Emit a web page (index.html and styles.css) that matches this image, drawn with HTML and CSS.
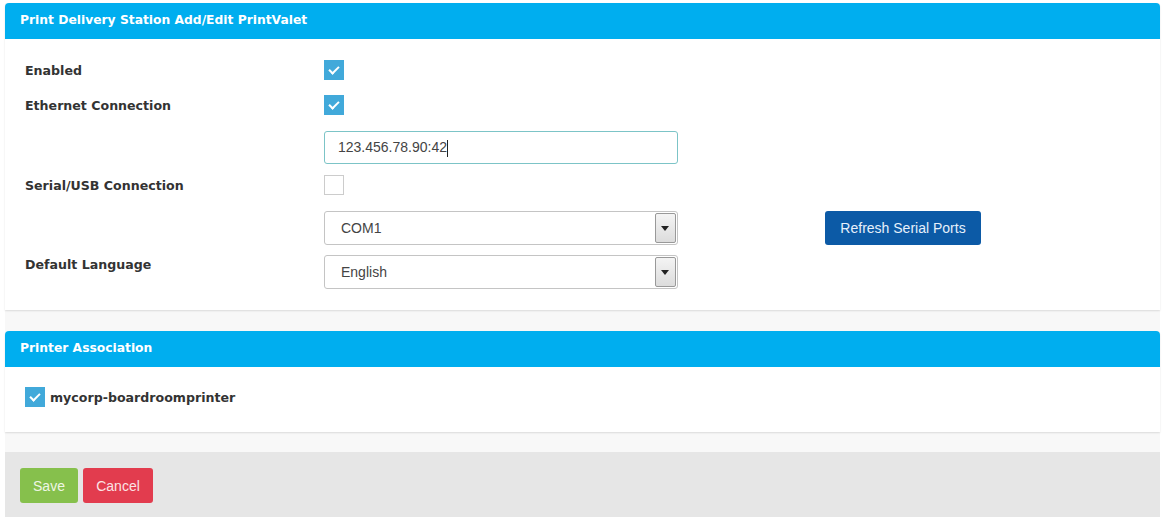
FILE: index.html
```html
<!DOCTYPE html>
<html lang="en">
<head>
    <meta charset="UTF-8">
    <title>Print Delivery Station Add/Edit PrintValet</title>
    <link rel="stylesheet" href="styles.css">
</head>
<body>

    <div class="page">
        <div class="panel">
            <div class="panel-heading">Print Delivery Station Add/Edit PrintValet</div>
            <div class="panel-body">
                <div class="row row-enabled">
                    <label>Enabled</label>
                    <span class="check checked"></span>
                </div>
                <div class="row row-ethernet">
                    <label>Ethernet Connection</label>
                    <span class="check checked"></span>
                </div>
                <div class="row row-address">
                    <span></span>
                    <div class="text-input">123.456.78.90:42<span class="caret"></span></div>
                </div>
                <div class="row row-serial">
                    <label>Serial/USB Connection</label>
                    <span class="check"></span>
                </div>
                <div class="row row-port">
                    <span></span>
                    <div class="select">
                        <span class="select-value">COM1</span>
                        <span class="select-arrow"></span>
                    </div>
                    <span></span>
                    <button class="btn btn-blue" type="button">Refresh Serial Ports</button>
                </div>
                <div class="row row-language">
                    <label>Default Language</label>
                    <div class="select">
                        <span class="select-value">English</span>
                        <span class="select-arrow"></span>
                    </div>
                </div>
            </div>
        </div>

        <div class="panel panel-last">
            <div class="panel-heading">Printer Association</div>
            <div class="panel-body panel-body-short">
                <div class="printer">
                    <span class="check checked"></span>
                    <label>mycorp-boardroomprinter</label>
                </div>
            </div>
        </div>

        <div class="footer">
            <button class="btn btn-green" type="button">Save</button>
            <button class="btn btn-red" type="button">Cancel</button>
        </div>
    </div>

</body>
</html>
```

FILE: styles.css
```css
body {
    margin: 0;
    padding: 0;
    background-color: #fff;
    font-family: "DejaVu Sans", Verdana, sans-serif;
    color: #333;
}

.page {
    margin: 3px 4px 0 5px;
    background-color: #f8f8f8;
    display: flex;
    flex-direction: column;
}

.panel {
    background-color: #fff;
    border-radius: 4px 4px 0 0;
    box-shadow: 0 1px 2px rgba(0, 0, 0, 0.12);
    margin-bottom: 21px;
}

.panel-last {
    margin-bottom: 20px;
}

.panel-heading {
    height: 36px;
    line-height: 35px;
    padding: 0 15px;
    background-color: #00aeef;
    border-radius: 4px 4px 0 0;
    color: #fff;
    font-size: 12.3px;
    font-weight: bold;
}

.panel-body {
    padding: 21px 20px 21px 20px;
}

.panel-body-short {
    padding: 20px 20px 25px 20px;
}

.row {
    display: grid;
    grid-template-columns: 299px 354px 147px auto;
    align-items: center;
}

.row label,
.printer label {
    font-size: 12.6px;
    font-weight: bold;
    color: #333;
}

.row-enabled { margin-bottom: 15px; }
.row-ethernet { margin-bottom: 16px; }
.row-address { margin-bottom: 11px; }
.row-serial { margin-bottom: 16px; }
.row-port { margin-bottom: 10px; }
.row-language { align-items: start; }
.row-language label { padding-top: 2px; }

/* checkboxes */
.check {
    display: inline-block;
    box-sizing: border-box;
    width: 20px;
    height: 20px;
    border: 1px solid #ccc;
    background-color: #fff;
    position: relative;
}

.check.checked {
    border-color: #41a9da;
    background-color: #41a9da;
}

.check.checked::after {
    content: "";
    position: absolute;
    left: 6px;
    top: 3px;
    width: 4px;
    height: 8px;
    border-right: 2px solid #fff;
    border-bottom: 2px solid #fff;
    transform: rotate(45deg);
}

/* inputs */
.text-input {
    box-sizing: border-box;
    height: 33px;
    padding: 0 13px;
    border: 1px solid #7cc4c7;
    border-radius: 3px;
    font-family: "Liberation Sans", Arial, sans-serif;
    font-size: 14px;
    line-height: 31px;
    color: #444;
}

.caret {
    display: inline-block;
    width: 1px;
    height: 17px;
    background-color: #222;
    vertical-align: middle;
}

.select {
    box-sizing: border-box;
    height: 34px;
    display: flex;
    border: 1px solid #c4c4c4;
    border-radius: 3px;
    font-family: "Liberation Sans", Arial, sans-serif;
    font-size: 14px;
    color: #444;
}

.select-value {
    flex: 1;
    padding-left: 16px;
    line-height: 32px;
}

.select-arrow {
    width: 19px;
    margin: 1px;
    border: 1px solid #999;
    border-radius: 2px;
    background: linear-gradient(#f4f4f4, #dcdcdc);
    position: relative;
}

.select-arrow::after {
    content: "";
    position: absolute;
    left: 5px;
    top: 12px;
    border-left: 4px solid transparent;
    border-right: 4px solid transparent;
    border-top: 5px solid #222;
}

/* buttons */
.btn {
    height: 34px;
    padding: 0;
    border: none;
    border-radius: 3px;
    color: #fff;
    font-family: "Liberation Sans", Arial, sans-serif;
    font-size: 14px;
    cursor: pointer;
}

.btn-blue {
    justify-self: start;
    width: 156px;
    background-color: #0c5aa6;
    color: #e6f0fb;
}

.btn-green {
    width: 58px;
    height: 35px;
    background-color: #86c04c;
    color: #eef6e4;
}

.btn-red {
    width: 70px;
    height: 35px;
    background-color: #e23c4e;
    color: #fbe3e5;
}

.printer {
    display: flex;
    align-items: center;
    gap: 5px;
}

.footer {
    display: flex;
    gap: 5px;
    padding: 16px 15px 14px 15px;
    background-color: #e6e6e6;
}
```
